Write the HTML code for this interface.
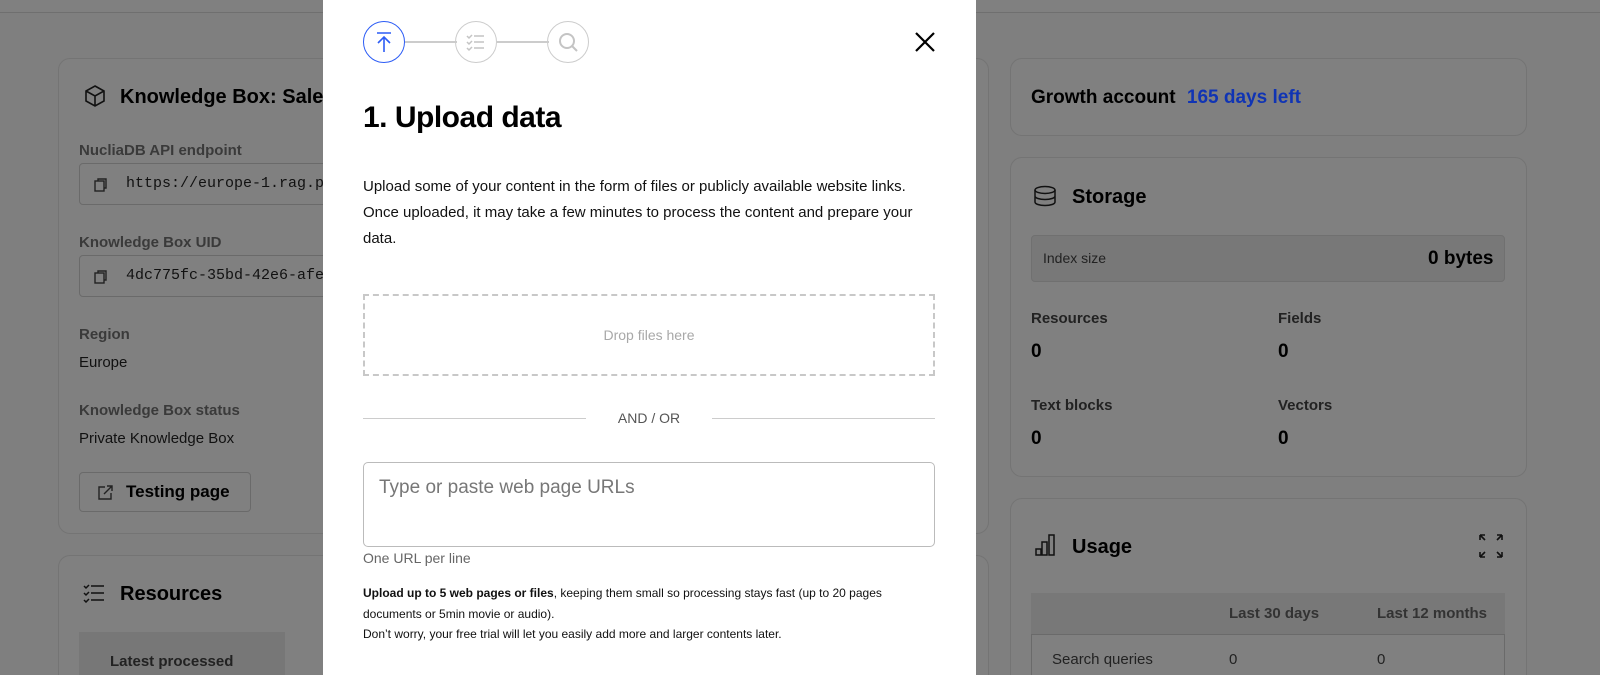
<!DOCTYPE html>
<html><head><meta charset="utf-8"><style>
*{box-sizing:border-box;margin:0;padding:0}
html,body{width:1600px;height:677px;overflow:hidden}
body{background:#7f7f7f;font-family:"Liberation Sans",sans-serif;color:#000}
#wrap{position:relative;width:1600px;height:677px;overflow:hidden}
.top{position:absolute;left:0;top:0;width:1600px;height:13px;border-bottom:1px solid #6f6f6f;background:#808080}
.card{position:absolute;border:1px solid #747474;border-radius:12px;background:#808080}
.cut{border-bottom:none;border-radius:12px 12px 0 0}
.abs{position:absolute}
.lbl{position:absolute;font-size:15px;font-weight:bold;color:#3a3a3a}
.val{position:absolute;font-size:15px;color:#111}
.field{position:absolute;border:1px solid #6a6a6a;border-radius:4px;height:42px;font-family:"Liberation Mono",monospace;font-size:15px;color:#111;padding:11px 0 0 46px;overflow:hidden;white-space:nowrap}
h2{position:absolute;font-size:20px;font-weight:bold}
.modal{position:absolute;left:323px;top:0;width:653px;height:675px;background:#fff}
.circ{position:absolute;width:42px;height:42px;border-radius:50%;border:1.5px solid #ccc;top:21px}
.bottom{position:absolute;left:0;top:675px;width:1600px;height:2px;background:#fff}
</style></head><body><div id="wrap">
<div class="top"></div>
<div class="card" style="left:58px;top:58px;width:931px;height:476px"></div>
<svg class="abs" style="left:83px;top:84px" width="24" height="24" viewBox="0 0 24 24" fill="none" stroke="#111" stroke-width="1.6"><path d="M12 2 21 7v10l-9 5-9-5V7z M3 7l9 5 9-5 M12 12v10"/></svg>
<h2 style="left:120px;top:86px">Knowledge Box: Sales</h2>
<div class="lbl" style="left:79px;top:142px">NucliaDB API endpoint</div>
<div class="field" style="left:79px;top:163px;width:300px">https://europe-1.rag.p</div>
<div class="lbl" style="left:79px;top:234px">Knowledge Box UID</div>
<div class="field" style="left:79px;top:255px;width:300px">4dc775fc-35bd-42e6-afe</div>
<svg class="abs" style="left:93px;top:177px" width="16" height="16" fill="none" stroke="#222" stroke-width="1.4"><rect x="2" y="4" width="9" height="10"/><path d="M5 4V2h8v9h-2"/></svg>
<svg class="abs" style="left:93px;top:269px" width="16" height="16" fill="none" stroke="#222" stroke-width="1.4"><rect x="2" y="4" width="9" height="10"/><path d="M5 4V2h8v9h-2"/></svg>
<div class="lbl" style="left:79px;top:326px">Region</div>
<div class="val" style="left:79px;top:354px">Europe</div>
<div class="lbl" style="left:79px;top:402px">Knowledge Box status</div>
<div class="val" style="left:79px;top:430px">Private Knowledge Box</div>
<div class="abs" style="left:79px;top:472px;width:172px;height:40px;border:1px solid #6a6a6a;border-radius:4px"></div>
<svg class="abs" style="left:97px;top:484px" width="17" height="17" fill="none" stroke="#222" stroke-width="1.4"><path d="M8 3H2v12h12V9 M10 2h5v5 M15 2 7 10"/></svg>
<div class="abs" style="left:126px;top:482px;font-size:17px;font-weight:bold">Testing page</div>
<div class="card cut" style="left:58px;top:555px;width:931px;height:120px"></div>
<svg class="abs" style="left:83px;top:583px" width="22" height="20" fill="none" stroke="#111" stroke-width="1.5"><path d="M8 3h13M8 10h13M8 17h13M1 3l2 2 3-3M1 10l2 2 3-3M1 17l2 2 3-3"/></svg>
<h2 style="left:120px;top:583px">Resources</h2>
<div class="abs" style="left:79px;top:632px;width:206px;height:43px;background:#777"></div>
<div class="abs" style="left:110px;top:653px;height:22px;overflow:hidden;font-size:15px;font-weight:bold;color:#222">Latest processed</div>

<div class="card" style="left:1010px;top:58px;width:517px;height:78px"></div>
<div class="abs" style="left:1031px;top:87px;font-size:19px;font-weight:bold">Growth account <span style="color:#1034b4;margin-left:6px">165 days left</span></div>
<div class="card" style="left:1010px;top:157px;width:517px;height:320px"></div>
<svg class="abs" style="left:1033px;top:185px" width="24" height="22" fill="none" stroke="#111" stroke-width="1.5"><ellipse cx="12" cy="5" rx="10" ry="3.5"/><path d="M2 5v12c0 2 4.5 3.5 10 3.5s10-1.5 10-3.5V5M2 11c0 2 4.5 3.5 10 3.5s10-1.5 10-3.5"/></svg>
<h2 style="left:1072px;top:186px">Storage</h2>
<div class="abs" style="left:1031px;top:235px;width:474px;height:47px;background:#787878;border:1px solid #707070;border-radius:4px"></div>
<div class="abs" style="left:1043px;top:250px;font-size:14px;color:#222">Index size</div>
<div class="abs" style="left:1428px;top:248px;font-size:19px;font-weight:bold">0 bytes</div>
<div class="lbl" style="left:1031px;top:310px;color:#222">Resources</div>
<div class="lbl" style="left:1278px;top:310px;color:#222">Fields</div>
<div class="abs" style="left:1031px;top:341px;font-size:19px;font-weight:bold">0</div>
<div class="abs" style="left:1278px;top:341px;font-size:19px;font-weight:bold">0</div>
<div class="lbl" style="left:1031px;top:397px;color:#222">Text blocks</div>
<div class="lbl" style="left:1278px;top:397px;color:#222">Vectors</div>
<div class="abs" style="left:1031px;top:428px;font-size:19px;font-weight:bold">0</div>
<div class="abs" style="left:1278px;top:428px;font-size:19px;font-weight:bold">0</div>
<div class="card cut" style="left:1010px;top:498px;width:517px;height:177px"></div>
<svg class="abs" style="left:1035px;top:533px" width="22" height="24" fill="none" stroke="#111" stroke-width="1.5"><path d="M1 16h5v6H1zM7 9h5v13H7zM14 2h5v20h-5z"/></svg>
<h2 style="left:1072px;top:536px">Usage</h2>
<svg class="abs" style="left:1479px;top:534px" width="24" height="24" fill="none" stroke="#111" stroke-width="1.6"><path d="M1 1h5M1 1v5M1 1l5 5M23 1h-5M23 1v5M23 1l-5 5M1 23h5M1 23v-5M1 23l5-5M23 23h-5M23 23v-5M23 23l-5-5"/></svg>
<div class="abs" style="left:1031px;top:593px;width:474px;height:82px;border:1px solid #6a6a6a;border-bottom:none;border-radius:4px 4px 0 0"></div>
<div class="abs" style="left:1031px;top:593px;width:474px;height:42px;background:#787878;border-bottom:1px solid #6a6a6a"></div>
<div class="abs" style="left:1229px;top:605px;font-size:15px;font-weight:bold;color:#333">Last 30 days</div>
<div class="abs" style="left:1377px;top:605px;font-size:15px;font-weight:bold;color:#333">Last 12 months</div>
<div class="abs" style="left:1052px;top:651px;height:24px;overflow:hidden;font-size:15px;color:#222">Search queries</div>
<div class="abs" style="left:1229px;top:651px;height:24px;overflow:hidden;font-size:15px;color:#222">0</div>
<div class="abs" style="left:1377px;top:651px;height:24px;overflow:hidden;font-size:15px;color:#222">0</div>

<div class="modal">
<div class="abs" style="left:82px;top:41px;width:52px;height:1.5px;background:#ccc"></div>
<div class="abs" style="left:174px;top:41px;width:52px;height:1.5px;background:#ccc"></div>
<div class="circ" style="left:40px;border-color:#2c5cf5"></div>
<svg class="abs" style="left:40px;top:21px" width="42" height="42" fill="none" stroke="#2c5cf5" stroke-width="1.6"><path d="M14 12h14M21 31V16M15 22l6-6 6 6"/></svg>
<div class="circ" style="left:132px"></div>
<svg class="abs" style="left:132px;top:21px" width="42" height="42" fill="none" stroke="#c4c4c4" stroke-width="1.5"><path d="M19 15h10M19 21h10M19 27h10M12 15l2 2 3-3M12 21l2 2 3-3M12 27l2 2 3-3"/></svg>
<div class="circ" style="left:224px"></div>
<svg class="abs" style="left:224px;top:21px" width="42" height="42" fill="none" stroke="#c4c4c4" stroke-width="2"><circle cx="20" cy="20" r="7"/><path d="M25 25l5 5"/></svg>
<svg class="abs" style="left:591px;top:31px" width="22" height="22" fill="none" stroke="#000" stroke-width="2.2"><path d="M2 2l18 18M20 2 2 20"/></svg>
<div class="abs" style="left:40px;top:101px;font-size:30px;font-weight:bold;letter-spacing:-0.5px">1. Upload data</div>
<div class="abs" style="left:40px;top:174px;width:570px;font-size:15px;line-height:26px;color:#111">Upload some of your content in the form of files or publicly available website links. Once uploaded, it may take a few minutes to process the content and prepare your data.</div>
<div class="abs" style="left:40px;top:294px;width:572px;height:82px;border:2px dashed #c8c8c8;text-align:center;padding-top:31px;font-size:14px;color:#a8a8a8">Drop files here</div>
<div class="abs" style="left:40px;top:418px;width:223px;height:1px;background:#ccc"></div>
<div class="abs" style="left:389px;top:418px;width:223px;height:1px;background:#ccc"></div>
<div class="abs" style="left:263px;top:410px;width:126px;text-align:center;font-size:14px;color:#555">AND / OR</div>
<div class="abs" style="left:40px;top:462px;width:572px;height:85px;border:1px solid #bbb;border-radius:5px;padding:14px 15px;font-size:19px;color:#777">Type or paste web page URLs</div>
<div class="abs" style="left:40px;top:550px;font-size:14px;color:#666">One URL per line</div>
<div class="abs" style="left:40px;top:583px;width:572px;font-size:12px;line-height:20.5px;color:#111"><b>Upload up to 5 web pages or files</b>, keeping them small so processing stays fast (up to 20 pages documents or 5min movie or audio).<br>Don’t worry, your free trial will let you easily add more and larger contents later.</div>
</div>
<div class="bottom"></div>
</div></body></html>
